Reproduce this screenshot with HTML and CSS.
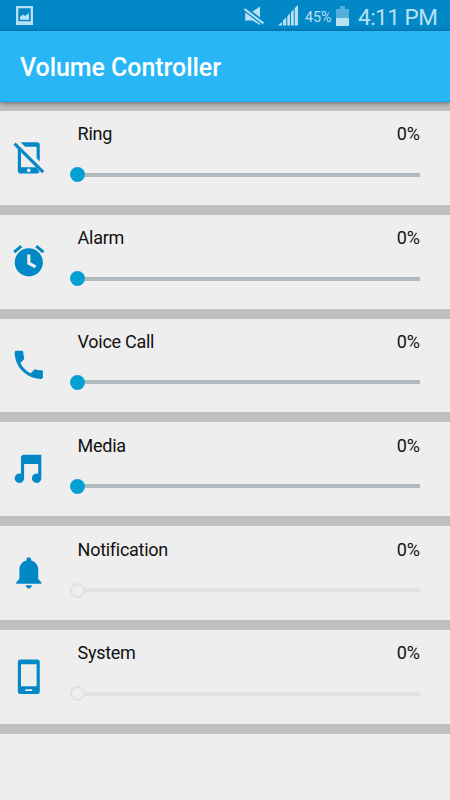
FILE: index.html
```html
<!DOCTYPE html>
<html lang="en">
<head>
  <meta charset="UTF-8">
  <title>Volume Controller</title>
  <meta name="viewport" content="width=device-width, initial-scale=1">
  <link rel="stylesheet" href="styles.css">
</head>
<body>
  <div class="statusbar">
    <svg class="picture" width="17" height="19" viewBox="0 0 17 19">
      <path fill-rule="evenodd" d="M0 0h17v19H0zM2.3 2.3v13h12.4v-13z"/>
      <path d="M4 13.7V11l3-2.5 2 1.5 4-3v6.700z"/>
    </svg>
    <svg class="mute" width="20" height="20" viewBox="0 0 20 20">
      <path d="M1.200 5.500H8.500L16 .5v18.500L8.500 14.500H1.200z"/>
      <path class="slash-gap" d="M-1 1.500L21 18.300"/>
      <path class="slash" d="M.5 3L19.500 17.500"/>
    </svg>
    <svg class="signal" width="20" height="21" viewBox="0 0 20 21">
      <path d="M0 20.500l4-3.500v3.500zM5 20.500v-5l3.200-3.200v8.200zM9.300 20.500v-9.300l2.700-3v12.300zM13 20.500V7.200l2.700-2.900v16.200zM16.700 20.500V3.200L20 0v20.500z"/>
    </svg>
    <span class="percent">45%</span>
    <svg class="battery" width="13" height="20" viewBox="0 0 13 20">
      <path opacity=".45" d="M4 0h5v3h4v9H0V3h4z"/>
      <path d="M0 12h13v8H0z"/>
    </svg>
    <span class="clock">4:11 PM</span>
  </div>

  <header class="toolbar">
    <h1>Volume Controller</h1>
  </header>

  <main class="list">
    <section class="row">
      <svg class="icon" viewBox="0 0 24 24">
        <path fill-rule="evenodd" d="M5 6.100V20.200q0 1.800 1.800 1.800H17.200q1.200 0 1.700-.9L16.800 18H7V8.100zM12 18.800a1.200 1.200 0 1 1 0 2.400 1.200 1.200 0 0 1 0-2.400z"/>
        <path d="M6.800 2.100H17.200Q19 2.100 19 3.900V14.300l-2-2V5H9.700z"/>
        <path d="M3.600 2.200L21.900 20.500l-1.400 1.400L2.200 3.600z"/>
      </svg>
      <div class="control">
        <div class="caption"><span class="name">Ring</span><span>0%</span></div>
        <div class="slider"><i class="thumb"></i></div>
      </div>
    </section>

    <section class="row">
      <svg class="icon" viewBox="0 0 24 24">
        <path fill-rule="evenodd" d="M22 5.720l-4.600-3.860-1.290 1.530 4.600 3.860zM7.880 3.390L6.600 1.860 2 5.710l1.290 1.530zM12 4a9 9 0 1 0 0 18 9 9 0 0 0 0-18zM11 8h2v5l3.800 2-.9 1.800L11 14.200z"/>
      </svg>
      <div class="control">
        <div class="caption"><span class="name">Alarm</span><span>0%</span></div>
        <div class="slider"><i class="thumb"></i></div>
      </div>
    </section>

    <section class="row">
      <svg class="icon" viewBox="0 0 24 24">
        <path d="M6.620 10.790c1.440 2.830 3.760 5.140 6.590 6.590l2.200-2.200c.27-.27.67-.36 1.020-.24 1.120.37 2.330.57 3.570.57.550 0 1 .45 1 1V20c0 .55-.45 1-1 1-9.390 0-17-7.610-17-17 0-.55.450-1 1-1h3.500c.55 0 1 .45 1 1 0 1.250.2 2.450.57 3.570.11.350.03.740-.25 1.020z"/>
      </svg>
      <div class="control">
        <div class="caption"><span class="name">Voice Call</span><span>0%</span></div>
        <div class="slider"><i class="thumb"></i></div>
      </div>
    </section>

    <section class="row">
      <svg class="icon" viewBox="0 0 24 24">
        <path d="M20 3v15a3 3 0 1 1-2-2.830V9H9v9a3 3 0 1 1-2-2.830V5q0-2 2-2z"/>
      </svg>
      <div class="control">
        <div class="caption"><span class="name">Media</span><span>0%</span></div>
        <div class="slider"><i class="thumb"></i></div>
      </div>
    </section>

    <section class="row">
      <svg class="icon" viewBox="0 0 24 24">
        <path d="M10 20h4q-.4 2-2 2t-2-2zM12 2c.9 0 1.500.6 1.500 1.400v.8C16.400 5 18 7.300 18 10v6l2 2v1H4v-1l2-2v-6c0-2.700 1.600-5 4.500-5.800v-.8C10.500 2.600 11.100 2 12 2z"/>
      </svg>
      <div class="control">
        <div class="caption"><span class="name">Notification</span><span>0%</span></div>
        <div class="slider disabled"><i class="thumb"></i></div>
      </div>
    </section>

    <section class="row">
      <svg class="icon" viewBox="0 0 24 24">
        <path fill-rule="evenodd" d="M6.500 1h11Q19 1 19 2.500v19q0 1.500-1.500 1.500h-11Q5 23 5 21.500v-19Q5 1 6.500 1zM7 4v14h10V4zM9.800 20v1.100h4.400V20z"/>
      </svg>
      <div class="control">
        <div class="caption"><span class="name">System</span><span>0%</span></div>
        <div class="slider disabled"><i class="thumb"></i></div>
      </div>
    </section>
  </main>
</body>
</html>
```
FILE: styles.css
```css
body {
  margin: 0;
  min-height: 800px;
  background: #eee;
  color: #111;
  font-family: Roboto, sans-serif;
}
.statusbar {
  display: flex;
  align-items: center;
  box-sizing: border-box;
  height: 31px;
  padding: 0 13px 0 16px;
  background: #0288c7;
  color: #b9e1f4;
  fill: #b9e1f4;
}
.mute {
  margin-left: auto;
}
.slash-gap {
  stroke: #0288c7;
  stroke-width: 5;
}
.slash {
  stroke: #b9e1f4;
  stroke-width: 2;
}
.signal {
  margin-left: 14px;
}
.percent {
  margin-left: 7px;
  padding-top: 2px;
  width: 28px;
  font-size: 14.3px;
}
.battery {
  margin-left: 3px;
}
.clock {
  margin-left: 9px;
  padding-top: 2px;
  width: 79px;
  font-size: 22.5px;
  letter-spacing: -0.5px;
  white-space: nowrap;
}
.toolbar {
  display: flex;
  align-items: center;
  position: relative;
  height: 71px;
  padding-left: 20px;
  background: #29b6f6;
  border-bottom: 1px solid #12aaf0;
  box-sizing: border-box;
  box-shadow: 0 1px 5px rgba(0, 0, 0, 0.5);
}
h1 {
  margin: 3px 0 0;
  color: #fff;
  font-size: 25px;
  font-weight: 500;
  letter-spacing: -0.05px;
}
.list {
  padding-top: 9px;
  background: #bfbfbf;
}
.row {
  display: flex;
  align-items: center;
  box-sizing: border-box;
  height: 103.8px;
  padding: 0 30px 0 10px;
  background: #eee;
  border-bottom: 10px solid #bfbfbf;
}
.icon {
  width: 37.6px;
  height: 37.6px;
  margin-bottom: 1px;
  fill: #0288c7;
}
.control {
  flex: 1;
  align-self: stretch;
  margin-left: 30px;
}
.caption {
  display: flex;
  justify-content: space-between;
  padding-top: 12.4px;
  font-size: 18px;
  line-height: 22px;
}
.name {
  letter-spacing: -0.28px;
}
.slider {
  display: flex;
  align-items: center;
  height: 15px;
  margin: 22px 0 0 -7.6px;
}
.slider::after {
  content: "";
  flex: 1;
  height: 4px;
  background: #b0b9bd;
}
.thumb {
  box-sizing: border-box;
  width: 15px;
  height: 15px;
  border-radius: 50%;
  background: #03a0d1;
}
.disabled::after {
  background: #dfe1e2;
}
.disabled .thumb {
  background: none;
  border: 2.5px solid #dfe1e2;
}
```
